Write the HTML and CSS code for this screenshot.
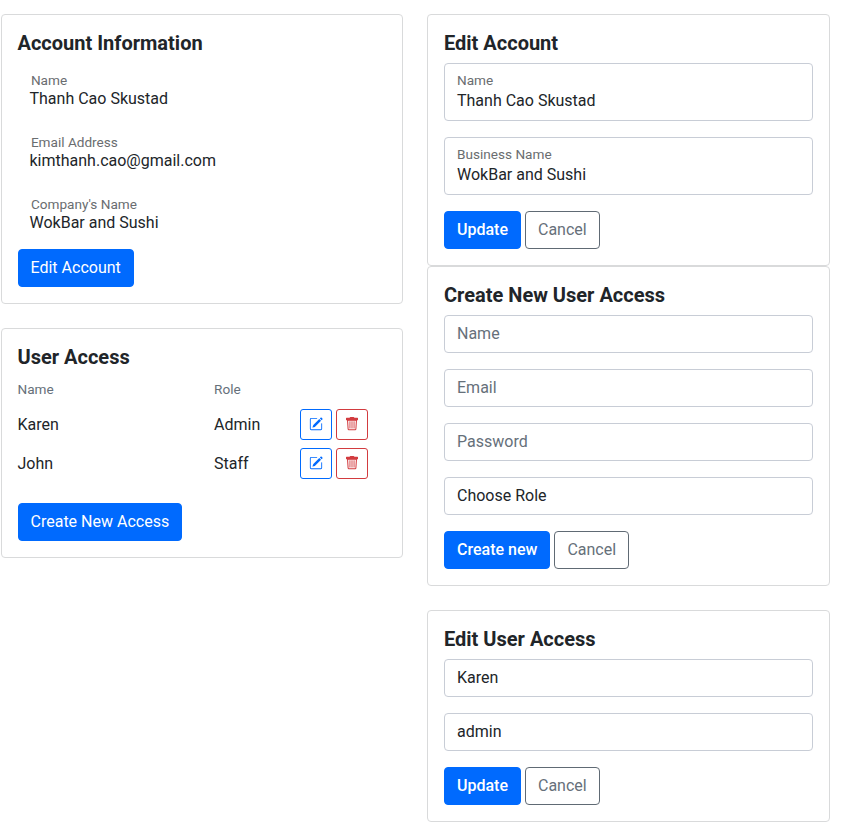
FILE: index.html
```html
<!DOCTYPE html>
<html lang="en">
<head>
<meta charset="utf-8">
<title>Account</title>
<link rel="stylesheet" href="styles.css">
</head>
<body>
<svg class="sprite" aria-hidden="true">
  <symbol id="pencil" viewBox="0 0 16 16"><path d="M15.502 1.94a.5.5 0 0 1 0 .706L14.459 3.69l-2-2L13.502.646a.5.5 0 0 1 .707 0l1.293 1.293zm-1.75 2.456-2-2L4.939 9.21a.5.5 0 0 0-.121.196l-.805 2.414a.25.25 0 0 0 .316.316l2.414-.805a.5.5 0 0 0 .196-.12l6.813-6.814z"/><path fill-rule="evenodd" d="M1 13.5A1.5 1.5 0 0 0 2.5 15h11a1.5 1.5 0 0 0 1.5-1.5v-6a.5.5 0 0 0-1 0v6a.5.5 0 0 1-.5.5h-11a.5.5 0 0 1-.5-.5v-11a.5.5 0 0 1 .5-.5H9a.5.5 0 0 0 0-1H2.5A1.5 1.5 0 0 0 1 2.5v11z"/></symbol>
  <symbol id="trash" viewBox="0 0 14 14"><path d="M4.6.8Q4.8 0 5.5 0h3q.7 0 .9.8h3.1q.5 0 .5.5v1.4q0 .5-.5.5H1.5q-.5 0-.5-.5V1.3q0-.5.5-.5z"/><path fill-rule="evenodd" d="M2 3h10l-.6 9q-.1 1.2-1.3 1.2H3.9q-1.2 0-1.3-1.2zm1.1.8.5 8q0 .5.5.5h5.8q.5 0 .5-.5l.5-8z"/><path d="M4.5 4.2h.9v7.2h-.9zM6.55 4.2h.9v7.2h-.9zM8.6 4.2h.9v7.2h-.9z"/></symbol>
</svg>
<main class="page">
  <div class="column left">
    <section class="card account">
      <h2>Account Information</h2>
      <dl class="info">
        <div><dt>Name</dt><dd>Thanh Cao Skustad</dd></div>
        <div><dt>Email Address</dt><dd>kimthanh.cao@gmail.com</dd></div>
        <div><dt>Company's Name</dt><dd>WokBar and Sushi</dd></div>
      </dl>
      <button class="btn primary">Edit Account</button>
    </section>
    <section class="card users">
      <h2>User Access</h2>
      <div class="row head"><span>Name</span><span>Role</span></div>
      <div class="row"><span>Karen</span><span>Admin</span>
        <div class="actions"><button class="icon edit" aria-label="Edit"><svg><use href="#pencil"/></svg></button><button class="icon delete" aria-label="Delete"><svg><use href="#trash"/></svg></button></div></div>
      <div class="row"><span>John</span><span>Staff</span>
        <div class="actions"><button class="icon edit" aria-label="Edit"><svg><use href="#pencil"/></svg></button><button class="icon delete" aria-label="Delete"><svg><use href="#trash"/></svg></button></div></div>
      <button class="btn primary create">Create New Access</button>
    </section>
  </div>
  <div class="column">
    <div class="stack">
      <section class="card">
        <h2>Edit Account</h2>
        <div class="field floating"><small>Name</small><span>Thanh Cao Skustad</span></div>
        <div class="field floating"><small>Business Name</small><span>WokBar and Sushi</span></div>
        <div class="buttons"><button class="btn primary">Update</button><button class="btn outline">Cancel</button></div>
      </section>
      <section class="card">
        <h2>Create New User Access</h2>
        <div class="field placeholder">Name</div>
        <div class="field placeholder">Email</div>
        <div class="field placeholder">Password</div>
        <div class="field">Choose Role</div>
        <div class="buttons"><button class="btn primary">Create new</button><button class="btn outline">Cancel</button></div>
      </section>
    </div>
    <section class="card">
      <h2>Edit User Access</h2>
      <div class="field">Karen</div>
      <div class="field">admin</div>
      <div class="buttons"><button class="btn primary">Update</button><button class="btn outline">Cancel</button></div>
    </section>
  </div>
</main>
</body>
</html>
```
FILE: styles.css
```css
* { box-sizing: border-box; }
body { margin: 0; background: #fff; color: #212529; font: 16px/24px Roboto, sans-serif; }
.sprite { display: none; }
.page { display: grid; grid-template-columns: 402px 403px; gap: 24px; padding: 14px 0 0 1px; align-items: start; }
.column { display: flex; flex-direction: column; gap: 24px; }
.card { padding: 16px; border: 1px solid #d9dadb; border-radius: 4px; }
.left .card { padding-left: 15.5px; }
h2 { margin: 0 0 8px; font-size: 20px; line-height: 24px; font-weight: 700; }
.card.account { height: 290px; }
.card.users { height: 230px; }
.info { margin: 0 0 14px; padding: 0 12px; }
.info div { height: 62px; padding-top: 8px; }
.info div:last-child { height: 48px; }
.info dt { margin-left: 1.4px; font-size: 13.6px; line-height: 18px; color: #6a6d70; }
.info dd { margin: 0; line-height: 20px; }
.btn { height: 38px; padding: 0 12px; border: 1px solid #006afe; border-radius: 4px; font: 500 16px/24px Roboto, sans-serif; white-space: nowrap; }
.primary { background: #006afe; color: #fff; }
.left .primary { font-weight: 400; }
.outline { background: #fff; border-color: #606a74; color: #66707a; font-weight: 400; }
.buttons { display: flex; gap: 4px; }
.field { display: flex; align-items: center; height: 38px; margin-bottom: 16px; padding: 0 12px; border: 1px solid #c8cdd6; border-radius: 4px; }
.placeholder { color: #66707a; }
.floating { height: 58px; flex-direction: column; align-items: flex-start; justify-content: flex-start; padding-top: 7px; }
.floating small { font-size: 13.6px; line-height: 18px; color: #6a6d70; }
.floating span { line-height: 24px; }
.row { display: grid; grid-template-columns: 196.5px 86px auto; align-items: center; height: 39px; }
.head { height: 18px; margin-bottom: 10px; font-size: 13.6px; color: #66707a; }
.actions { display: flex; gap: 4px; }
.icon { display: flex; align-items: flex-start; justify-content: center; width: 32px; height: 31px; padding: 7px 0 0; border: 1px solid; border-radius: 3px; background: #fff; }
.icon svg { width: 14px; height: 14px; fill: currentColor; }
.edit { color: #006afe; }
.delete { color: #d23b3f; }
.create { margin-top: 20px; }
```
